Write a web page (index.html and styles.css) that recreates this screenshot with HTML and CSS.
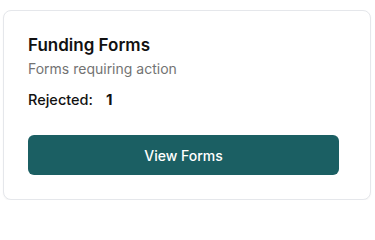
FILE: index.html
```html
<!DOCTYPE html>
<html>
<head>
<meta charset="utf-8">
<link rel="stylesheet" href="styles.css">
</head>
<body>
<div class="card">
  <h2 class="title">Funding Forms</h2>
  <p class="subtitle">Forms requiring action</p>
  <div class="stat"><span class="stat-label">Rejected:</span><span class="stat-value">1</span></div>
  <button class="btn">View Forms</button>
</div>
</body>
</html>
```
FILE: styles.css
```css
* { box-sizing: border-box; }
html, body { margin: 0; padding: 0; background: #ffffff; }
body {
  font-family: Inter, "Noto Sans", sans-serif;
  padding: 10px 4px 0 3px;
}
.card {
  width: 368px;
  height: 190px;
  border: 1px solid #e5e7eb;
  border-radius: 8px;
  background: #ffffff;
  box-shadow: 0 1px 2px rgba(0,0,0,0.04);
  padding: 21px 31px 0 24px;
  display: flex;
  flex-direction: column;
}
.title {
  margin: 0;
  font-size: 17px;
  font-weight: 600;
  line-height: 26px;
  color: #111111;
}
.subtitle {
  margin: 1px 0 0;
  font-size: 14px;
  line-height: 20px;
  color: #737373;
}
.stat {
  margin-top: 9px;
  font-size: 14.5px;
  line-height: 24px;
  font-weight: 500;
  color: #111111;
  display: flex;
  align-items: baseline;
  gap: 13px;
}
.stat-value { font-weight: 700; font-size: 15px; }
.btn {
  margin-top: 23px;
  height: 40px;
  width: 100%;
  flex: none;
  border: none;
  border-radius: 6px;
  background: #1b5f63;
  color: #ffffff;
  font-family: Inter, "Noto Sans", sans-serif;
  font-size: 14px;
  font-weight: 500;
}
```
